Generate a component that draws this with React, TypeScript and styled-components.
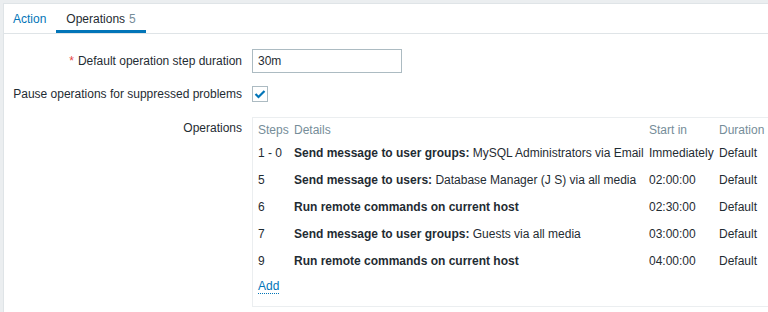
import styled, { createGlobalStyle } from 'styled-components'

const GlobalStyle = createGlobalStyle`
  html, body {
    margin: 0;
    padding: 0;
    background: #ebeef0;
    font-family: Arial, "Liberation Sans", sans-serif;
    font-size: 12px;
    color: #1f2c33;
  }
`

const Panel = styled.div`
  margin: 3px 0 0 3px;
  height: 309px;
  background: #ffffff;
  border-top: 1px solid #dfe4e7;
  border-left: 1px solid #dfe4e7;
  box-sizing: border-box;
  overflow: hidden;
`

const TabBar = styled.div`
  display: flex;
  height: 29px;
  border-bottom: 1px solid #dfe4e7;
`

const Tab = styled.div<{ $active?: boolean }>`
  display: flex;
  align-items: center;
  padding: 0 10px 0 ${(p) => (p.$active ? 10 : 9)}px;
  height: 29px;
  box-sizing: border-box;
  color: ${(p) => (p.$active ? '#1f2c33' : '#0275b8')};
  border-bottom: 3px solid ${(p) => (p.$active ? '#0275b8' : 'transparent')};
  padding-top: 3px;
`

const Count = styled.span`
  color: #768d99;
  margin-left: 4px;
`

const Form = styled.div`
  display: grid;
  grid-template-columns: 238px 1fr;
  column-gap: 10px;
  row-gap: 13px;
  padding-top: 15px;
  align-items: center;
`

const Label = styled.div<{ $top?: boolean }>`
  text-align: right;
  white-space: nowrap;
  align-self: ${(p) => (p.$top ? 'start' : 'center')};
  padding-top: ${(p) => (p.$top ? 6 : 0)}px;
`

const Required = styled.span`
  color: #e54545;
  margin-right: 4px;
`

const TextInput = styled.div`
  width: 150px;
  height: 24px;
  box-sizing: border-box;
  border: 1px solid #acbbc2;
  padding: 0 5px;
  display: flex;
  align-items: center;
`

const Checkbox = styled.div`
  width: 16px;
  height: 16px;
  box-sizing: border-box;
  border: 1px solid #acbbc2;
  display: flex;
  align-items: center;
  justify-content: center;
`

const OpsBox = styled.div`
  border: 1px solid #ebeef0;
  border-right: none;
  padding: 4px 0 8px 5px;
  height: 190px;
  box-sizing: border-box;
  margin-top: 2px;
`

const Row = styled.div<{ $head?: boolean }>`
  display: flex;
  align-items: center;
  height: ${(p) => (p.$head ? 16 : 27)}px;
  margin-bottom: ${(p) => (p.$head ? 1 : 0)}px;
  color: ${(p) => (p.$head ? '#768d99' : '#1f2c33')};
  white-space: nowrap;
`

const Cell = styled.div<{ $w?: number }>`
  width: ${(p) => (p.$w ? `${p.$w}px` : 'auto')};
  flex: ${(p) => (p.$w ? 'none' : '1')};
`

const AddLink = styled.span`
  display: inline-block;
  margin-top: 5px;
  color: #0275b8;
  border-bottom: 1px dotted #0275b8;
  line-height: 14px;
`

const ops = [
  { step: '1 - 0', bold: 'Send message to user groups:', rest: ' MySQL Administrators via Email', start: 'Immediately' },
  { step: '5', bold: 'Send message to users:', rest: ' Database Manager (J S) via all media', start: '02:00:00' },
  { step: '6', bold: 'Run remote commands on current host', rest: '', start: '02:30:00' },
  { step: '7', bold: 'Send message to user groups:', rest: ' Guests via all media', start: '03:00:00' },
  { step: '9', bold: 'Run remote commands on current host', rest: '', start: '04:00:00' },
]

export default function App() {
  return (
    <>
      <GlobalStyle />
      <Panel>
        <TabBar>
          <Tab>Action</Tab>
          <Tab $active>
            Operations<Count>5</Count>
          </Tab>
        </TabBar>
        <Form>
          <Label>
            <Required>*</Required>Default operation step duration
          </Label>
          <TextInput>30m</TextInput>
          <Label>Pause operations for suppressed problems</Label>
          <Checkbox>
            <svg width="12" height="10" viewBox="0 0 12 10">
              <path d="M1.5 5 L4.5 8 L10.5 2" fill="none" stroke="#0275b8" strokeWidth="2.2" />
            </svg>
          </Checkbox>
          <Label $top>Operations</Label>
          <OpsBox>
            <Row $head>
              <Cell $w={36}>Steps</Cell>
              <Cell $w={355}>Details</Cell>
              <Cell $w={70}>Start in</Cell>
              <Cell>Duration</Cell>
            </Row>
            {ops.map((o) => (
              <Row key={o.step}>
                <Cell $w={36}>{o.step}</Cell>
                <Cell $w={355}>
                  <b>{o.bold}</b>
                  {o.rest}
                </Cell>
                <Cell $w={70}>{o.start}</Cell>
                <Cell>Default</Cell>
              </Row>
            ))}
            <AddLink>Add</AddLink>
          </OpsBox>
        </Form>
      </Panel>
    </>
  )
}
